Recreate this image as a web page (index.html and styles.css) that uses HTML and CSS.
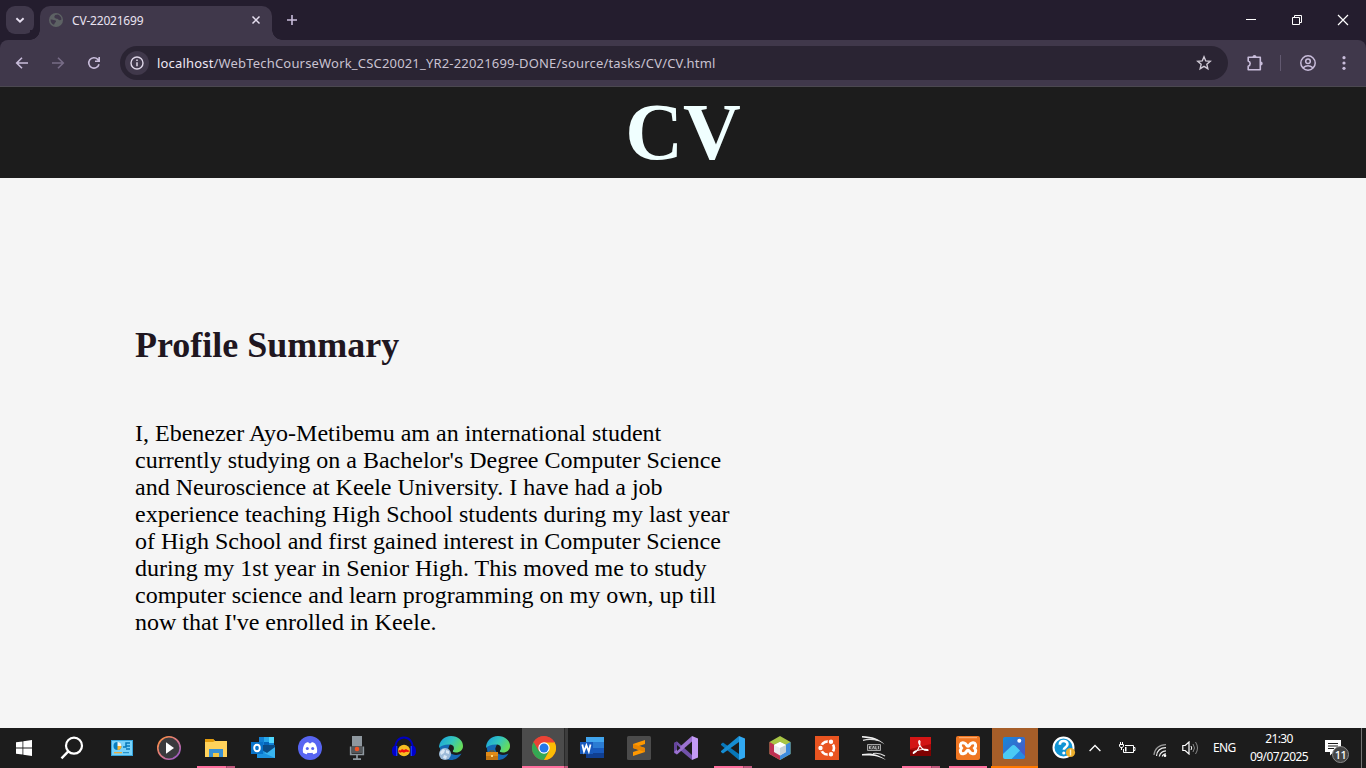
FILE: index.html
```html
<!DOCTYPE html>
<html lang="en">
<head>
<meta charset="utf-8">
<title>CV-22021699</title>
<link rel="stylesheet" href="styles.css">
</head>
<body>
<div class="screen">
  <div class="tabstrip">
    <button class="tab-search"><svg width="12" height="12" viewBox="0 0 12 12"><path d="M2.400 4.200 6 7.600l3.600-3.400" fill="none" stroke="#e6dff0" stroke-width="1.900"/></svg></button>
    <div class="tab">
      <svg class="favicon" width="14" height="14" viewBox="0 0 14 14"><circle cx="7" cy="7" r="7" fill="#5d6264"/><path d="M1.600 6.500c1.800 0 2.800.5 4.200.7 1.500.2 1.600 1.400.5 2.300-.8.700-.6 1.500-1.400 2.300C2.800 11 1.300 9 1.600 6.500zM6.200 2l2.600-.4C11 2.400 12.500 4.200 12.500 6.400c-1.200 1-2.400 1-3.200.1-.6-.8-1.300-.6-2.300-.9-1.700-.5-2.300-2-.8-3.600z" fill="#40384b"/></svg>
      <span class="tab-title">CV-22021699</span>
      <svg class="tab-close" width="10" height="10" viewBox="0 0 10 10"><path d="M1.500 1.500l7 7M8.500 1.500l-7 7" stroke="#e6dff0" stroke-width="1.500"/></svg>
    </div>
    <svg class="new-tab" width="12" height="12" viewBox="0 0 12 12"><path d="M6 1v10M1 6h10" stroke="#c9bddb" stroke-width="1.600"/></svg>
    <div class="window-buttons">
      <svg width="46" height="40" viewBox="0 0 46 40"><path d="M18 19.500h10" stroke="#fff"/></svg>
      <svg width="46" height="40" viewBox="0 0 46 40"><path d="M18.500 17.500h7v7h-7zM20.500 17.500v-2h7v7h-2" fill="none" stroke="#fff"/></svg>
      <svg width="46" height="40" viewBox="0 0 46 40"><path d="M18 15l10 10M28 15 18 25" stroke="#fff" stroke-width="1.200"/></svg>
    </div>
  </div>
  <div class="toolbar">
    <div class="nav">
      <svg width="14" height="14" viewBox="0 0 14 14"><path d="M13 7H2M7 1.700 1.700 7 7 12.300" fill="none" stroke="#c9bddb" stroke-width="1.600"/></svg>
      <svg width="14" height="14" viewBox="0 0 14 14"><path d="M1 7h11M7 1.700 12.300 7 7 12.300" fill="none" stroke="#776c87" stroke-width="1.600"/></svg>
      <svg width="14" height="14" viewBox="0 0 14 14"><path d="M12 8.200A5.200 5.200 0 1 1 10.800 3.400l1.300 1.500M12.200 1v4.300H8" fill="none" stroke="#c9bddb" stroke-width="1.600"/></svg>
    </div>
    <div class="omnibox">
      <span class="site-info"><svg width="14" height="14" viewBox="0 0 14 14"><circle cx="7" cy="7" r="6" fill="none" stroke="#ded6e8" stroke-width="1.400"/><path d="M7 6.200v4M7 3.600v1.500" stroke="#ded6e8" stroke-width="1.500"/></svg></span>
      <span class="url"><b>localhost</b>/WebTechCourseWork_CSC20021_YR2-22021699-DONE/source/tasks/CV/CV.html</span>
      <svg class="star" width="16" height="16" viewBox="0 0 16 16"><path d="M8 1.800l1.750 4.150 4.500.4-3.400 2.950 1 4.400L8 11.350 4.150 13.700l1-4.400-3.400-2.950 4.500-.4z" fill="none" stroke="#d0cad6" stroke-width="1.400"/></svg>
    </div>
    <div class="actions">
      <svg width="18" height="18" viewBox="0 0 18 18"><path d="M2.200 3.300h12.100v12.400H2.200v-3.500a2.700 2.700 0 0 0 0-5.200z" fill="none" stroke="#c9bddb" stroke-width="1.600" stroke-linejoin="round"/><path d="M6.500 3a2 2 0 0 1 4 0zM14.700 7.500a2 2 0 0 1 0 4z" fill="#c9bddb"/></svg>
      <i class="divider"></i>
      <svg width="16" height="16" viewBox="0 0 16 16"><circle cx="8" cy="8" r="7.200" fill="none" stroke="#c9bddb" stroke-width="1.500"/><circle cx="8" cy="6.300" r="2.300" fill="none" stroke="#c9bddb" stroke-width="1.500"/><path d="M3 12.800c3-2.500 7-2.500 10 0" fill="none" stroke="#c9bddb" stroke-width="1.500"/></svg>
      <svg class="kebab" width="4" height="16" viewBox="0 0 4 16"><g fill="#c9bddb"><circle cx="2" cy="2.700" r="1.600"/><circle cx="2" cy="8" r="1.600"/><circle cx="2" cy="13.300" r="1.600"/></g></svg>
    </div>
  </div>

  <header class="page-header"><h1>CV</h1></header>
  <main class="page">
    <h2>Profile Summary</h2>
    <p>I, Ebenezer Ayo-Metibemu am an international student<br>currently studying on a Bachelor's Degree Computer Science<br>and Neuroscience at Keele University. I have had a job<br>experience teaching High School students during my last year<br>of High School and first gained interest in Computer Science<br>during my 1st year in Senior High. This moved me to study<br>computer science and learn programming on my own, up till<br>now that I've enrolled in Keele.</p>
  </main>

  <footer class="taskbar">
    <div class="start"><svg width="16" height="16" viewBox="0 0 16 16"><path d="M0 2.300 6.500 1.400v6.200H0zM7.300 1.300 16 0v7.600H7.300zM0 8.400h6.500v6.200L0 13.700zM7.300 8.400H16V16l-8.700-1.300z" fill="#fff"/></svg></div>
    <div class="search"><svg width="24" height="24" viewBox="0 0 24 24"><circle cx="14" cy="9.700" r="8" fill="none" stroke="#fff" stroke-width="2.200"/><path d="M8.300 15.400 1.500 22.300" stroke="#fff" stroke-width="2.400"/></svg></div>
    <div class="apps">
      <div class="app"><svg viewBox="0 0 24 24"><path d="M1 4h22v16H1z" fill="#36a5dc"/><path d="M2 5h20v14H2z" fill="#79d3fb"/><circle cx="7.500" cy="10" r="4" fill="#087dbd"/><path d="M7.500 10V6a4 4 0 0 1 4 4z" fill="#f7f7ef"/><path d="M7.500 10h4a4 4 0 0 1-4 4z" fill="#ffb52b"/><path d="M13 11h3V7h4M16 10h4M16 13h4" fill="none" stroke="#0879b8" stroke-width="1.500"/><path d="M4 16.700h8" stroke="#f5a82b" stroke-width="1.200"/><path d="M13 16.700h6" stroke="#1784bd"/></svg></div>
      <div class="app"><svg viewBox="0 0 24 24"><defs><linearGradient id="mp" x1="0" y1="0" x2="1" y2="1"><stop stop-color="#ff913a"/><stop offset=".5" stop-color="#db7886"/><stop offset="1" stop-color="#8953d1"/></linearGradient></defs><circle cx="12" cy="12" r="11.200" fill="#3a3a3d" stroke="url(#mp)" stroke-width="1.600"/><path d="M9 6.200 17 12 9 17.800z" fill="#fff"/></svg></div>
      <div class="app open double"><svg viewBox="0 0 24 24"><path d="M1 3h8l2 2h12v16H1z" fill="#ffd25b"/><path d="M1 3h8l2 2-2 1H1z" fill="#e39b0b"/><path d="M5 21v-8h14v8h-4v-4H9v4z" fill="#3a91d4"/><path d="M9 17h6v4H9z" fill="#f6c744"/></svg></div>
      <div class="app"><svg viewBox="0 0 24 24"><path d="M8 1h15v11H8z" fill="#1381d4"/><path d="M13 1h5v5h-5z" fill="#28a8ea"/><path d="M18 1h5v6h-5z" fill="#50d9ff"/><path d="M13 6h5v6h-5z" fill="#0364b8"/><path d="M6 11h18v11H6z" fill="#1b92df"/><path d="M24 11 13 17l11 5z" fill="#39b5ef"/><path d="m6 11 10 6 8-6v-2H6z" fill="#0a4b83"/><path d="M0 6h12v12H0z" fill="#0873c9"/><ellipse cx="6" cy="12" rx="2.800" ry="3.200" fill="none" stroke="#fff" stroke-width="1.900"/></svg></div>
      <div class="app"><svg viewBox="0 0 24 24"><circle cx="12" cy="12" r="12" fill="#5865f2"/><path d="M5 16.500c-.6-3.500.2-6.500 2-9 1.200-.8 2.100-1.100 3.400-1.200l.6 1h2l.6-1c1.300.1 2.200.4 3.400 1.200 1.800 2.500 2.600 5.500 2 9-1.200 1-2.300 1.400-3.700 1.700l-.9-1.500c-1.600.4-3.200.4-4.800 0l-.9 1.500c-1.400-.3-2.500-.7-3.700-1.700z" fill="#fff"/><circle cx="9.300" cy="12.500" r="1.500" fill="#5865f2"/><circle cx="14.700" cy="12.500" r="1.500" fill="#5865f2"/></svg></div>
      <div class="app"><svg viewBox="0 0 24 24"><path d="M7 0h10v10H7z" fill="#8f989f"/><path d="M7 10h10v7H7z" fill="#55585b"/><circle cx="12" cy="13" r="2.300" fill="#f35325"/><path d="M5.700 10.500v8h12.600v-8M12 19v4M8 23.200h8" fill="none" stroke="#8f989f" stroke-width="1.700"/></svg></div>
      <div class="app"><svg viewBox="0 0 24 24"><path d="M3.500 13C2-2.500 22-2.500 20.500 13" fill="none" stroke="#0000c0" stroke-width="2"/><ellipse cx="12" cy="14.500" rx="6" ry="5.800" fill="#f7be22"/><path d="m6 15 1.500-1 1 .6 1.500-1.600 2 1 2-1 1.500 1 2.500 1-2 1-2-.2-2 1-2-.8-2 .8z" fill="#f00e0e"/><path d="M4.500 10C1 9 0 12 0 15s1 5.500 4.500 5zM19.500 10c3.500-1 4.500 2 4.500 5s-1 5.500-4.500 5z" fill="#0000cc"/><path d="M4.700 10v10M19.300 10v10" stroke="#1737ff" stroke-width="1.400"/></svg></div>
      <div class="app"><svg viewBox="0 0 24 24"><defs><linearGradient id="eg" x1="0" y1="0" x2="1" y2=".5"><stop stop-color="#159de2"/><stop offset=".55" stop-color="#34c6bd"/><stop offset="1" stop-color="#66dc5b"/></linearGradient></defs><g id="edge"><path d="M1 9c3-3 8-3 10-1l-1 3c-2 4 2 8 7 8 2 0 4-1 5.500-1.500C20 22 16 24 12 24 5 24 0 18 1 9z" fill="#1568b4"/><path d="M0 12C0 5 5 0 12 0s12 4.500 12 10c0 4-3 6.500-7 6.500-2.500 0-3.800-1-3-2 2-2.700.6-5.800-3-6C6 8.200 2 9.500 0 12z" fill="url(#eg)"/><path d="M11 9.500c-1.800 1.500-1.700 3.700-.5 5.800l3.500.2c-.8-1 1.300-1.500 0-4.200-.5-1.200-1.700-1.900-3-1.800z" fill="#1c1c1c"/></g><circle cx="6" cy="18" r="6" fill="#9dbbd8"/><path d="m1 16 3-3 2 1-1 3-3 2zM7 14l3 1v3l-3-1zM5 19l3 1-1 3-3-1z" fill="#d9e7f4"/></svg></div>
      <div class="app"><svg viewBox="0 0 24 24"><use href="#edge"/><path d="M0 16h12v8H0z" fill="#c27512"/><path d="M0 16h12v4H0z" fill="#e18b18"/><path d="M4 16v-1h4v1" fill="none" stroke="#85500c"/><path d="M5 19h2v2H5z" fill="#ffd77b"/></svg></div>
      <div class="app active"><svg viewBox="0 0 24 24"><circle cx="12" cy="12" r="12" fill="#ea4335"/><path d="M1.600 6a12 12 0 0 0 10.400 18l5.200-9L12 12z" fill="#34a853"/><path d="M12 24A12 12 0 0 0 22.400 6H12l5.200 9z" fill="#fbbc05"/><path d="M1.600 6A12 12 0 0 1 22.400 6.400H12L6.800 15z" fill="#ea4335"/><circle cx="12" cy="12" r="5.700" fill="#fff"/><circle cx="12" cy="12" r="4.500" fill="#2378e8"/></svg></div>
      <div class="app"><svg viewBox="0 0 24 24"><path d="M6 1h18v6H6z" fill="#41a5ee"/><path d="M6 6h18v6H6z" fill="#2b7cd3"/><path d="M6 12h18v5H6z" fill="#185abd"/><path d="M6 17h18v5H6z" fill="#103f91"/><path d="M0 6h13v12H0z" fill="#185abd"/><path d="m2.300 8.500 1.700 7 2.400-6.300 2.400 6.300 1.700-7" fill="none" stroke="#fff" stroke-width="1.800"/></svg></div>
      <div class="app"><svg viewBox="0 0 24 24"><rect width="24" height="24" rx="1.500" fill="#4b4b4b"/><path d="m6 8 12-4v4L12 10l6 2v4L6 20v-4l6-2-6-2z" fill="#ff9800"/><path d="m6 12 6 2 6 2v-4l-6-2-6-2z" fill="#e88400"/></svg></div>
      <div class="app"><svg viewBox="0 0 24 24"><path d="M0 7 3 5.500 18 19v5L0 9z" fill="#7252aa"/><path d="M0 7v10l3 1.500V5.500z" fill="#65459b"/><path d="m3 18.500 15-13V0L0 16z" fill="#9b72d0"/><path d="m18 0 6 2.500v19L18 24z" fill="#c39af5"/><path d="M3 9v6l3.500-3z" fill="#1c1c1c"/><path d="m18 7-5.500 5 5.500 5z" fill="#1c1c1c"/></svg></div>
      <div class="app open double"><svg viewBox="0 0 24 24"><path d="m0 8 2-1.500L18 18v6L0 9z" fill="#0877b9"/><path d="m0 16 2 1.500L18 6V0L0 15z" fill="#168dd2"/><path d="m18 0 6 2.500v19L18 24z" fill="#31a9f2"/><path d="m18 7-6.500 5 6.500 5z" fill="#1c1c1c"/></svg></div>
      <div class="app"><svg viewBox="0 0 24 24"><path d="m12 0 10.500 6v12L12 24 1.500 18V6z" fill="#a8c545"/><path d="M1.500 6 12 12v12L1.500 18z" fill="#be3152"/><path d="M22.500 6 12 12v12l10.500-6z" fill="#3d8bdd"/><path d="m12 6 6 3v7l-6 3.500L6 16V9z" fill="#e9edf0"/><path d="m12 6 6 3-6 3-6-3z" fill="#fff"/><path d="m12 12 6-3v7l-6 3.500z" fill="#c7d1d9"/></svg></div>
      <div class="app"><svg viewBox="0 0 24 24"><path d="M0 0h24v24H0z" fill="#e95420"/><circle cx="12.500" cy="12" r="6.500" fill="none" stroke="#fff" stroke-width="2.600"/><g fill="#fff" stroke="#e95420" stroke-width="1.200"><circle cx="5.500" cy="12" r="2.800"/><circle cx="16" cy="5.800" r="2.800"/><circle cx="16" cy="18.200" r="2.800"/></g></svg></div>
      <div class="app"><svg viewBox="0 0 24 24"><path d="M0 0c10 .2 18 3 22.500 8.500C17 4.500 11 2.500 0 1.500zM0 18c10-1.800 17 .5 24 6-7-3.800-13-5-24-4.500z" fill="#f2f2f2"/><path d="M1 4.300c6-1.700 11-1 16 .5M11 17.500c5-.8 9 .5 12 2.500" fill="none" stroke="#ddd" stroke-width="1.200"/><path d="M5.500 8.500h13v6h-13z" fill="#3c3c3c" stroke="#a5a5a5"/><path d="M7.500 10v3M9.500 10l-2 1.500 2 1.500M10.500 13l1-3 1 3M13.700 10v3h1.500M16.500 10v3" fill="none" stroke="#ddd" stroke-width=".7"/></svg></div>
      <div class="app open double"><svg viewBox="0 0 24 24"><path d="M1 1h21v19H1z" fill="#a90a0a"/><path d="M1 1h21v7L1 13z" fill="#d31515"/><path d="M1 14h21v6H1z" fill="#7e0202"/><path d="M4.500 17.500c4-2 7-7.500 6.500-12-.5-2-2-.5-1 2 2 5 5 7.500 9 7 1-1.700-6-1.700-12 .3-2.500 1-3.300 2.300-2.500 2.700z" fill="none" stroke="#fff" stroke-width="1.100"/></svg></div>
      <div class="app open"><svg viewBox="0 0 24 24"><rect width="24" height="24" rx="2" fill="#ef7622"/><path d="M3 1.700h18" stroke="#ffb77f"/><path d="M8 7c-4-1-4.500 3-2.500 5C3.500 14.500 4 18.500 8 17.500c3-.5 2-3.200 4-3.200s1 2.700 4 3.200c4 1 4.500-3 2.500-5.500 2-2 1.500-6-2.500-5-3 .5-2 3.200-4 3.200S11 7.500 8 7z" fill="none" stroke="#fff" stroke-width="3"/></svg></div>
      <div class="app attention"><svg viewBox="0 0 24 24"><defs><linearGradient id="ph" x1="0" y1="0" x2="1" y2="1"><stop stop-color="#128ddd"/><stop offset="1" stop-color="#554dbf"/></linearGradient><clipPath id="phc"><rect x="1" y="1" width="22" height="22" rx="2"/></clipPath></defs><g clip-path="url(#phc)"><path d="M0 0h24v24H0z" fill="url(#ph)"/><path d="M9 12c2-3.500 4-3.500 6 0l9 9v3H5z" fill="#258ae0"/><path d="M0 19 9.500 10q2-2 4 0L18 14.500 9 23.500H0z" fill="#4acbf5"/></g><circle cx="17.300" cy="4.700" r="2" fill="#fff"/></svg></div>
    </div>
    <div class="tray">
      <svg class="help" width="26" height="24" viewBox="0 0 26 24"><circle cx="11.500" cy="11.500" r="10" fill="#1094d4" stroke="#fff" stroke-width="2"/><path d="M7.800 8.700c0-5 7.700-4.700 7.700-.4 0 3-3.700 2.800-3.700 5.500" fill="none" stroke="#fff" stroke-width="2.600"/><circle cx="11.800" cy="17" r="1.600" fill="#fff"/><circle cx="18.500" cy="16.500" r="4.600" fill="#edae2b"/><path d="M18.500 13.500v6" stroke="#fff3cf" stroke-width="1.400"/></svg>
      <svg class="caret" width="12" height="8" viewBox="0 0 12 8"><path d="m.6 7 5.400-5.500L11.400 7" fill="none" stroke="#fff" stroke-width="1.300"/></svg>
      <svg class="battery" width="18" height="14" viewBox="0 0 18 14"><path d="M7 4.500h8.500v7h-10V8M15.500 6.500h1.500v3h-1.500M1.500 3.500h4V5L4.500 6.500h-2L1.500 5zM2.500 3V1M4.500 3V1M3.500 7v2" fill="none" stroke="#fff"/><path d="M7 6h1.500v4.500H7z" fill="#fff"/></svg>
      <svg class="wifi" width="14" height="14" viewBox="0 0 14 14"><g fill="none" stroke-width="1.200"><path d="M1 12C1.500 6 6 1.600 13 1.600" stroke="#999"/><path d="M3.500 13C4 8 7.500 4.700 13 4.700M6.300 13.500C7 10 9 8 13 7.800M9.300 13.500c.3-1.500 1.700-2.600 3.700-2.700" stroke="#eee"/></g><circle cx="12" cy="12.700" r="1.300" fill="#fff"/></svg>
      <svg class="sound" width="17" height="14" viewBox="0 0 17 14"><path d="M.8 4.500h2.400L7 1v12L3.200 9.500H.8z" fill="none" stroke="#fff" stroke-width="1.200"/><path d="M9 5q1.500 2 0 4" fill="none" stroke="#fff"/><path d="M11 3q3 4 0 8M13.500 1q4 6 0 12" fill="none" stroke="#888"/></svg>
      <span class="lang">ENG</span>
      <div class="clock"><span>21:30</span><span>09/07/2025</span></div>
      <div class="notice"><svg width="16" height="16" viewBox="0 0 16 16"><path d="M0 0h16v12H8.500L5 15.500V12H0z" fill="#fff"/><path d="M3 3.500h10M3 6h10M3 8.500h6" stroke="#1c1c1c"/></svg><span class="count">11</span></div>
      <i class="desktop-edge"></i>
    </div>
  </footer>
</div>
</body>
</html>
```

FILE: styles.css
```css
* { box-sizing: border-box; }
body { margin: 0; overflow: hidden; font-family: "Noto Sans", "Open Sans", sans-serif; }
svg { display: block; flex: none; }
.screen { width: 1366px; height: 768px; display: flex; flex-direction: column; background: #f5f5f5; }

.tabstrip { height: 40px; flex: none; display: flex; align-items: center; padding-left: 6px; background: #241d2e; }
.tab-search { width: 28px; height: 28px; padding: 0; border: 0; border-radius: 9px; background: #40384b; display: grid; place-items: center; }
.tab { position: relative; width: 232px; height: 34px; margin: 6px 0 0 6px; padding: 0 11px 6px 9px; border-radius: 10px 10px 0 0; background: #40384b; display: flex; align-items: center; }
.tab::before, .tab::after { content: ""; position: absolute; bottom: 0; width: 10px; height: 10px; }
.tab::before { left: -10px; background: radial-gradient(circle at 0 0, #241d2e 9.500px, #40384b 10px); }
.tab::after { right: -10px; background: radial-gradient(circle at 100% 0, #241d2e 9.500px, #40384b 10px); }
.tab-title { flex: 1; margin-left: 9px; font-size: 12px; letter-spacing: -0.2px; color: #e9e2f1; }
.new-tab { margin-left: 14px; }
.window-buttons { margin-left: auto; display: flex; }

.toolbar { height: 47px; flex: none; display: flex; align-items: center; background: #40384b; border-bottom: 1px solid #4b4850; border-radius: 8px 8px 0 0; box-shadow: 0 -8px 0 #241d2e; }
.tabstrip, .tab { z-index: 1; }
.nav { display: flex; gap: 22px; padding-left: 15px; width: 120px; }
.omnibox { width: 1108px; height: 34px; border-radius: 17px; background: #2a2433; display: flex; align-items: center; padding: 0 16px 0 5px; }
.site-info { width: 24px; height: 24px; border-radius: 50%; background: #40384b; display: grid; place-items: center; }
.url { flex: 1; margin-left: 8px; font-size: 13px; letter-spacing: 0.182px; color: #c9c2d1; white-space: nowrap; }
.url b { font-weight: 400; color: #eee8f4; }
.actions { flex: 1; display: flex; align-items: center; padding-left: 18px; }
.divider { width: 1px; height: 16px; background: #625970; margin: 0 19px 0 16px; }
.actions .kebab { margin-left: 26px; }

.page-header { height: 91px; flex: none; background: #1c1c1c; display: flex; justify-content: center; }
.page-header h1 { margin: 0; font: bold 80px/91px "Liberation Serif", serif; color: #f0ffff; }
.page { flex: 1; padding: 147px 0 0 135px; font-family: "Liberation Serif", serif; }
.page h2 { margin: 0; font-size: 36px; line-height: 41px; color: #20161f; white-space: nowrap; }
.page p { margin: 54px 0 0; font-size: 24px; line-height: 27px; color: #000; white-space: nowrap; }

.taskbar { height: 40px; flex: none; display: flex; background: #1c1c1c; color: #fff; }
.start { width: 48px; display: grid; place-items: center; }
.search { width: 50px; padding: 8px 0 0 12px; }
.apps { display: flex; width: 940px; }
.app { position: relative; width: 47px; padding: 8px 0 0 12px; }
.app svg { width: 24px; height: 24px; }
.app.open::after, .app.active::after { content: ""; position: absolute; left: 5px; bottom: 0; width: 38px; height: 2px; background: #ff6f9e; }
.app.double::after { background: linear-gradient(90deg, #ff6f9e 29px, #7d3b52 29px, #c0577c 30px); }
.app.active { padding-left: 11px; background: linear-gradient(90deg, transparent 1px, #4c4c4c 1px, #4c4c4c 43px, #292929 43px, #292929 44px, #3d3d3d 44px); }
.app.active::after { left: 1px; width: 46px; background: linear-gradient(90deg, #ff6f9e 42px, #7d3b52 42px, #c0577c 43px); }
.app.attention { padding-left: 11px; background: linear-gradient(90deg, #1c1c1c 1px, #a65e29 1px); border-bottom: 2px solid #ff7900; }
.tray { flex: 1; display: flex; align-items: center; font-size: 12px; }
.help { margin-left: 14px; }
.caret { margin-left: 11px; }
.battery { margin-left: 17px; }
.wifi { margin: 3px 0 0 17px; }
.sound { margin-left: 15px; }
.lang { width: 24px; margin-left: 14px; letter-spacing: -0.6px; line-height: 16px; margin-top: -1px; }
.clock { width: 60px; margin-left: 12px; display: flex; flex-direction: column; align-items: center; line-height: 18px; letter-spacing: -0.600px; }
.notice { position: relative; width: 24px; height: 24px; margin-left: 16px; padding-top: 4px; }
.count { position: absolute; left: 7px; top: 10px; width: 17px; height: 17px; border-radius: 50%; border: 1px solid #8a8a8a; background: #454545; font-size: 11px; font-weight: 500; line-height: 15px; letter-spacing: -0.5px; text-align: center; }
.desktop-edge { width: 1px; height: 40px; margin-left: auto; margin-right: 4px; background: #747474; }
```
